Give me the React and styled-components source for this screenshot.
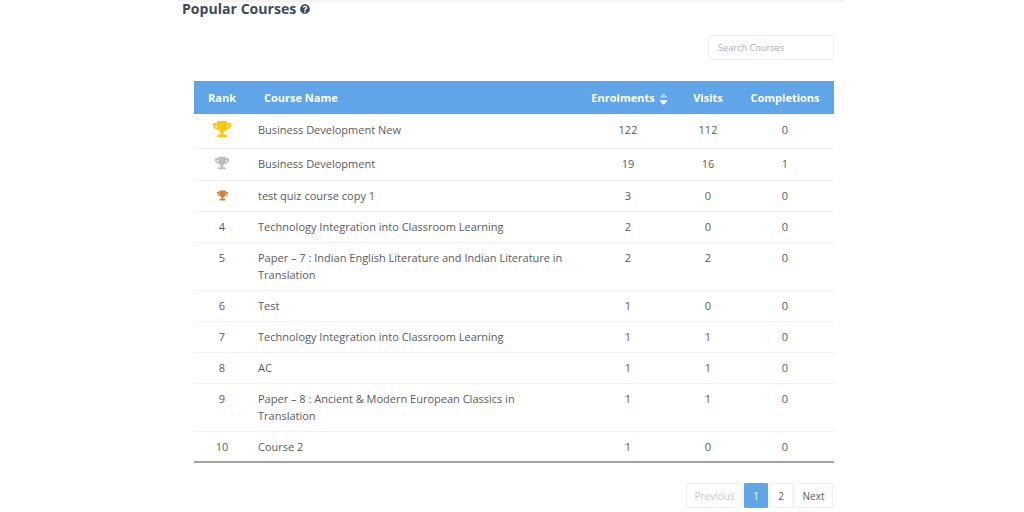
import React from 'react';
import styled, { createGlobalStyle } from 'styled-components';
import { FaTrophy, FaQuestionCircle, FaSortUp, FaSortDown } from 'react-icons/fa';

const Global = createGlobalStyle`
    html, body {
        margin: 0;
        padding: 0;
        background: #fff;
    }
    body {
        font-family: "Open Sans", "Liberation Sans", sans-serif;
        color: #555;
    }
`

const Page = styled.div`
    width: 1024px;
    height: 512px;
    overflow: hidden;
    padding-left: 178px;
    box-sizing: border-box;
`

const Panel = styled.div`
    width: 667px;
    height: 512px;
    box-sizing: border-box;
    border-top: 2px solid #f3f3f3;
    padding: 0 11px 0 16px;
`

const Title = styled.h2`
    margin: 0 0 0 -12px;
    height: 30px;
    display: flex;
    align-items: center;
    gap: 4px;
    font-size: 14.1px;
    line-height: 15px;
    padding-bottom: 18px;
    box-sizing: border-box;
    font-weight: 700;
    color: #3b4b5c;
`

const HelpIcon = styled(FaQuestionCircle)`
    font-size: 10px;
    color: #3b4b5c;
    margin-top: 2px;
`

const SearchRow = styled.div`
    display: flex;
    justify-content: flex-end;
    margin: 3px 0 21px;
`

const SearchInput = styled.input`
    width: 126px;
    height: 25px;
    box-sizing: border-box;
    border: 1px solid #eef0f2;
    border-radius: 2px;
    padding: 0 9px;
    font-family: inherit;
    font-size: 9.2px;
    outline: none;

    &::placeholder {
        color: #a9b2bb;
        opacity: 1;
    }
`

const Table = styled.table`
    width: 640px;
    table-layout: fixed;
    border-collapse: collapse;
    border-bottom: 2px solid #a0a4a8;
`

const Col = styled.col`
    width: ${(props) => props.$w}px;
`

const HeadRow = styled.tr`
    height: 33px;
    background: #60a5e8;
`

const Th = styled.th`
    padding: ${(props) => (props.$left ? '0 8px 0 14px' : '0')};
    text-align: ${(props) => (props.$left ? 'left' : 'center')};
    font-size: 11px;
    font-weight: 700;
    color: #fff;
    white-space: nowrap;
`

const SortIcons = styled.span`
    display: inline-block;
    position: relative;
    width: 8px;
    height: 13px;
    margin-left: 2px;
    vertical-align: -3px;
`

const SortUp = styled(FaSortUp)`
    position: absolute;
    left: 0;
    top: 0;
    font-size: 13px;
    color: #a9cff3;
`

const SortDown = styled(FaSortDown)`
    position: absolute;
    left: 0;
    top: 1px;
    font-size: 13px;
    color: #fff;
`

const Row = styled.tr`
    height: ${(props) => props.$h}px;
    border-bottom: 1px solid #f0f1f2;

    &:last-child {
        border-bottom: none;
    }

    td {
        padding-bottom: ${(props) => props.$lift || 0}px;
        padding-top: ${(props) => (props.$tall ? 6 : 0)}px;
        vertical-align: ${(props) => (props.$tall ? 'top' : 'middle')};
    }
`

const Cell = styled.td`
    padding: 0;
    text-align: center;
    font-size: 11px;
    line-height: 17px;
    color: #5c5c5c;
`

const NameCell = styled(Cell)`
    padding-left: 8px;
    padding-right: 8px;
    text-align: left;
`

const Trophy = styled(FaTrophy)`
    display: block;
    margin: 0 auto;
    font-size: ${(props) => props.$size}px;
    color: ${(props) => props.$color};
`

const Pager = styled.div`
    display: flex;
    justify-content: flex-end;
    gap: 1px;
    margin-top: 20px;
    padding-right: 1px;
`

const PageButton = styled.button`
    height: 25px;
    width: ${(props) => props.$w}px;
    padding: 0;
    box-sizing: border-box;
    border: 1px solid ${(props) => (props.$active ? '#60a5e8' : '#eef0f2')};
    border-radius: 1px;
    background: ${(props) => (props.$active ? '#60a5e8' : '#fff')};
    color: ${(props) => (props.$active ? '#fff' : props.$muted ? '#c3cad1' : '#5c5c5c')};
    font-family: inherit;
    font-size: 10px;
`

const trophies = {
    1: { size: 18, color: '#fdc806' },
    2: { size: 14, color: '#bdbdbd' },
    3: { size: 11, color: '#cf7f33' },
}

const courses = [
    { name: 'Business Development New', enrol: 122, visits: 112, done: 0, h: 34, lift: 3 },
    { name: 'Business Development', enrol: 19, visits: 16, done: 1, h: 32, lift: 2 },
    { name: 'test quiz course copy 1', enrol: 3, visits: 0, done: 0, h: 31 },
    { name: 'Technology Integration into Classroom Learning', enrol: 2, visits: 0, done: 0, h: 31 },
    { name: 'Paper – 7 : Indian English Literature and Indian Literature in Translation', enrol: 2, visits: 2, done: 0, h: 48, tall: true },
    { name: 'Test', enrol: 1, visits: 0, done: 0, h: 31 },
    { name: 'Technology Integration into Classroom Learning', enrol: 1, visits: 1, done: 0, h: 31 },
    { name: 'AC', enrol: 1, visits: 1, done: 0, h: 31 },
    { name: 'Paper – 8 : Ancient & Modern European Classics in Translation', enrol: 1, visits: 1, done: 0, h: 48, tall: true },
    { name: 'Course 2', enrol: 1, visits: 0, done: 0, h: 31 },
]

export default function App() {
    return (
        <Page>
            <Global />
            <Panel>
                <Title>Popular Courses <HelpIcon /></Title>
                <SearchRow>
                    <SearchInput placeholder="Search Courses" />
                </SearchRow>
                <Table>
                    <colgroup>
                        <Col $w={56} />
                        <Col $w={326} />
                        <Col $w={104} />
                        <Col $w={56} />
                        <Col $w={98} />
                    </colgroup>
                    <thead>
                        <HeadRow>
                            <Th>Rank</Th>
                            <Th $left>Course Name</Th>
                            <Th>Enrolments<SortIcons><SortUp /><SortDown /></SortIcons></Th>
                            <Th>Visits</Th>
                            <Th>Completions</Th>
                        </HeadRow>
                    </thead>
                    <tbody>
                        {courses.map((el, index) => {
                            const trophy = trophies[index + 1]
                            return (
                                <Row key={index} $h={el.h} $lift={el.lift} $tall={el.tall}>
                                    <Cell>{trophy ? <Trophy $size={trophy.size} $color={trophy.color} /> : index + 1}</Cell>
                                    <NameCell>{el.name}</NameCell>
                                    <Cell>{el.enrol}</Cell>
                                    <Cell>{el.visits}</Cell>
                                    <Cell>{el.done}</Cell>
                                </Row>
                            )
                        })}
                    </tbody>
                </Table>
                <Pager>
                    <PageButton $w={57} $muted>Previous</PageButton>
                    <PageButton $w={24} $active>1</PageButton>
                    <PageButton $w={24}>2</PageButton>
                    <PageButton $w={39}>Next</PageButton>
                </Pager>
            </Panel>
        </Page>
    )
}
